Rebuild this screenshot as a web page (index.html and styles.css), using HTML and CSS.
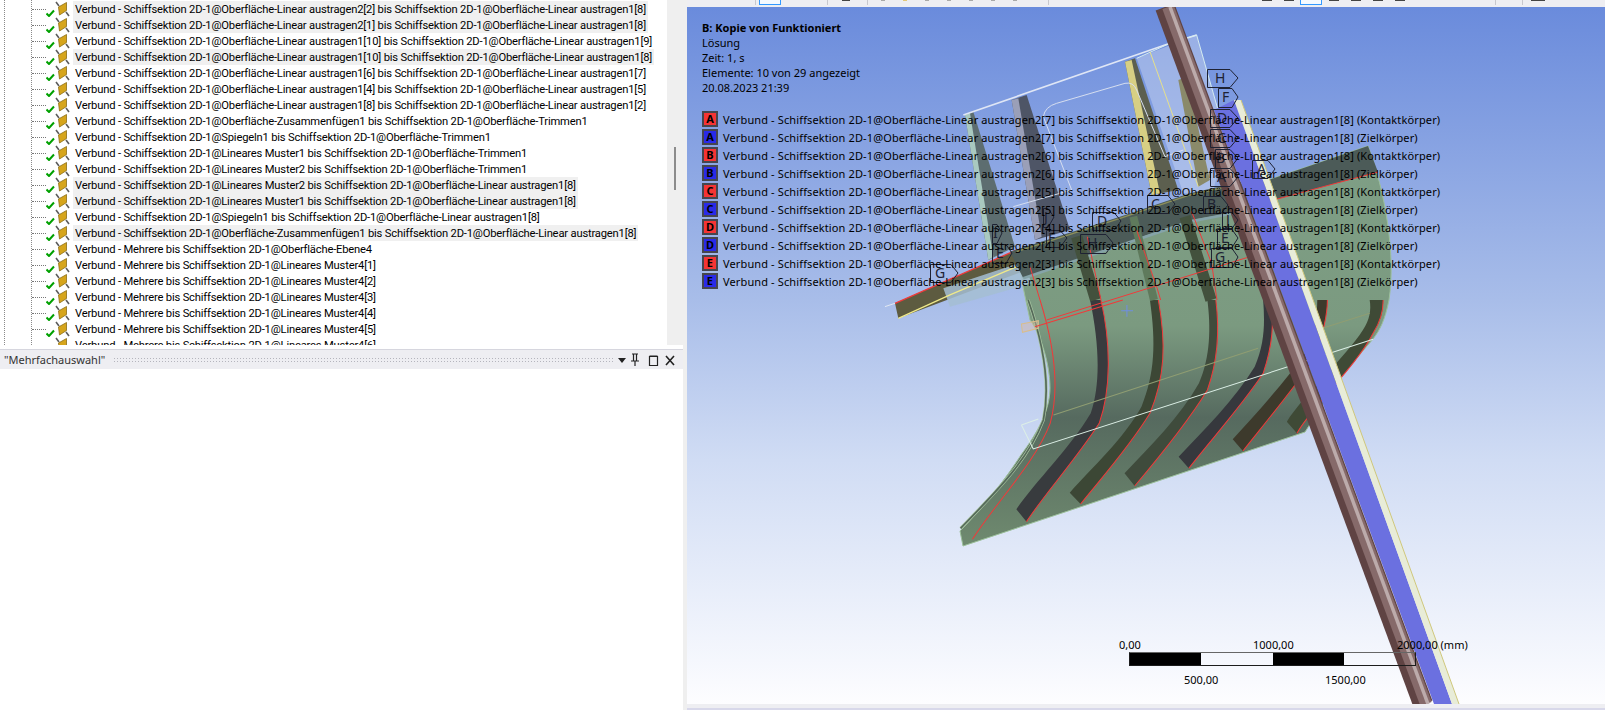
FILE: index.html
```html
<!DOCTYPE html>
<html lang="de">
<head>
    <meta charset="UTF-8">
    <meta name="viewport" content="width=device-width, initial-scale=1.0">
    <title>Mechanical - Verbindungen</title>
    <link rel="stylesheet" href="styles.css">
</head>
<body>

<svg class="defs" width="0" height="0">
    <symbol id="contact" viewBox="0 0 26 16">
        <path d="M10 1 L13 5 M20 11 L23 15" stroke="#5c5c5c" stroke-width="1.6" fill="none"/>
        <path d="M12.5 6 L20.5 1.5 L20.5 9.5 L13.5 14 Z" fill="#d6a51c" stroke="#8c6d14" stroke-width="0.8"/>
        <path d="M0.5 12.5 L3 15 L8 9.5" stroke="#00a000" stroke-width="2" fill="none"/>
    </symbol>
</svg>

<div class="app">
    <!-- Left: tree and details -->
    <div class="left">
        <div class="tree-wrap">
            <div class="tree">
                <div class="row hl"><span class="stub"></span><svg class="icon"><use href="#contact"/></svg><span class="label">Verbund - Schiffsektion 2D-1@Oberfläche-Linear austragen2[2] bis Schiffsektion 2D-1@Oberfläche-Linear austragen1[8]</span></div>
                <div class="row hl"><span class="stub"></span><svg class="icon"><use href="#contact"/></svg><span class="label">Verbund - Schiffsektion 2D-1@Oberfläche-Linear austragen2[1] bis Schiffsektion 2D-1@Oberfläche-Linear austragen1[8]</span></div>
                <div class="row"><span class="stub"></span><svg class="icon"><use href="#contact"/></svg><span class="label">Verbund - Schiffsektion 2D-1@Oberfläche-Linear austragen1[10] bis Schiffsektion 2D-1@Oberfläche-Linear austragen1[9]</span></div>
                <div class="row hl"><span class="stub"></span><svg class="icon"><use href="#contact"/></svg><span class="label">Verbund - Schiffsektion 2D-1@Oberfläche-Linear austragen1[10] bis Schiffsektion 2D-1@Oberfläche-Linear austragen1[8]</span></div>
                <div class="row"><span class="stub"></span><svg class="icon"><use href="#contact"/></svg><span class="label">Verbund - Schiffsektion 2D-1@Oberfläche-Linear austragen1[6] bis Schiffsektion 2D-1@Oberfläche-Linear austragen1[7]</span></div>
                <div class="row"><span class="stub"></span><svg class="icon"><use href="#contact"/></svg><span class="label">Verbund - Schiffsektion 2D-1@Oberfläche-Linear austragen1[4] bis Schiffsektion 2D-1@Oberfläche-Linear austragen1[5]</span></div>
                <div class="row"><span class="stub"></span><svg class="icon"><use href="#contact"/></svg><span class="label">Verbund - Schiffsektion 2D-1@Oberfläche-Linear austragen1[8] bis Schiffsektion 2D-1@Oberfläche-Linear austragen1[2]</span></div>
                <div class="row"><span class="stub"></span><svg class="icon"><use href="#contact"/></svg><span class="label">Verbund - Schiffsektion 2D-1@Oberfläche-Zusammenfügen1 bis Schiffsektion 2D-1@Oberfläche-Trimmen1</span></div>
                <div class="row"><span class="stub"></span><svg class="icon"><use href="#contact"/></svg><span class="label">Verbund - Schiffsektion 2D-1@Spiegeln1 bis Schiffsektion 2D-1@Oberfläche-Trimmen1</span></div>
                <div class="row"><span class="stub"></span><svg class="icon"><use href="#contact"/></svg><span class="label">Verbund - Schiffsektion 2D-1@Lineares Muster1 bis Schiffsektion 2D-1@Oberfläche-Trimmen1</span></div>
                <div class="row"><span class="stub"></span><svg class="icon"><use href="#contact"/></svg><span class="label">Verbund - Schiffsektion 2D-1@Lineares Muster2 bis Schiffsektion 2D-1@Oberfläche-Trimmen1</span></div>
                <div class="row hl"><span class="stub"></span><svg class="icon"><use href="#contact"/></svg><span class="label">Verbund - Schiffsektion 2D-1@Lineares Muster2 bis Schiffsektion 2D-1@Oberfläche-Linear austragen1[8]</span></div>
                <div class="row hl"><span class="stub"></span><svg class="icon"><use href="#contact"/></svg><span class="label">Verbund - Schiffsektion 2D-1@Lineares Muster1 bis Schiffsektion 2D-1@Oberfläche-Linear austragen1[8]</span></div>
                <div class="row"><span class="stub"></span><svg class="icon"><use href="#contact"/></svg><span class="label">Verbund - Schiffsektion 2D-1@Spiegeln1 bis Schiffsektion 2D-1@Oberfläche-Linear austragen1[8]</span></div>
                <div class="row hl"><span class="stub"></span><svg class="icon"><use href="#contact"/></svg><span class="label">Verbund - Schiffsektion 2D-1@Oberfläche-Zusammenfügen1 bis Schiffsektion 2D-1@Oberfläche-Linear austragen1[8]</span></div>
                <div class="row"><span class="stub"></span><svg class="icon"><use href="#contact"/></svg><span class="label">Verbund - Mehrere bis Schiffsektion 2D-1@Oberfläche-Ebene4</span></div>
                <div class="row"><span class="stub"></span><svg class="icon"><use href="#contact"/></svg><span class="label">Verbund - Mehrere bis Schiffsektion 2D-1@Lineares Muster4[1]</span></div>
                <div class="row"><span class="stub"></span><svg class="icon"><use href="#contact"/></svg><span class="label">Verbund - Mehrere bis Schiffsektion 2D-1@Lineares Muster4[2]</span></div>
                <div class="row"><span class="stub"></span><svg class="icon"><use href="#contact"/></svg><span class="label">Verbund - Mehrere bis Schiffsektion 2D-1@Lineares Muster4[3]</span></div>
                <div class="row"><span class="stub"></span><svg class="icon"><use href="#contact"/></svg><span class="label">Verbund - Mehrere bis Schiffsektion 2D-1@Lineares Muster4[4]</span></div>
                <div class="row"><span class="stub"></span><svg class="icon"><use href="#contact"/></svg><span class="label">Verbund - Mehrere bis Schiffsektion 2D-1@Lineares Muster4[5]</span></div>
                <div class="row"><span class="stub"></span><svg class="icon"><use href="#contact"/></svg><span class="label">Verbund - Mehrere bis Schiffsektion 2D-1@Lineares Muster4[6]</span></div>
            </div>
            <div class="scrollbar"><div class="thumb"></div></div>
        </div>

        <div class="details-bar">
            <span class="details-title">"Mehrfachauswahl"</span>
            <span class="grip"></span>
            <svg class="bar-icons" width="60" height="14" viewBox="0 0 60 14">
                <path d="M-1 5 H7 L3 10 Z" fill="#222"/>
                <path d="M13 1 H19 M14.5 1 V8 M17.5 1 V8 M12 8 H20 M16 8 V13" stroke="#222" stroke-width="1.2" fill="none"/>
                <path d="M30.5 3.5 H38.5 V12.5 H30.5 Z M30.5 3 H38.5" stroke="#222" stroke-width="1.2" fill="none"/>
                <path d="M47 3 L55 12 M55 3 L47 12" stroke="#222" stroke-width="1.6" fill="none"/>
            </svg>
        </div>
        <div class="details"></div>
    </div>

    <div class="splitter"></div>

    <!-- Right: graphics window -->
    <div class="right">
        <div class="toolbar">
            <span class="sep first"></span>
            <span class="tool selected"></span>
            <span class="sep second"></span>
            <span class="dash third"></span>
            <span class="sep"></span>
            <span class="mark"></span><span class="mark yellow"></span><span class="mark"></span><span class="mark"></span><span class="mark"></span><span class="mark"></span><span class="mark"></span>
            <span class="sep"></span>
            <span class="dash group"></span>
            <span class="dash"></span>
            <span class="tool selected small"></span>
            <span class="dash"></span>
            <span class="dash"></span>
            <span class="dash"></span>
            <span class="dash"></span>
            <span class="sep far"></span>
            <span class="sep near"></span>
            <span class="dash wide"></span>
        </div>

        <div class="viewport">
            <svg class="model" viewBox="687 7 918 697" preserveAspectRatio="none">
                <defs>
                    <linearGradient id="hull" x1="0" y1="0" x2="0" y2="1">
                        <stop offset="0" stop-color="#7f9f86"/>
                        <stop offset="0.45" stop-color="#7b9a80"/>
                        <stop offset="0.68" stop-color="#566a5f"/>
                        <stop offset="1" stop-color="#6f8a6f"/>
                    </linearGradient>
                </defs>

                <!-- hull sheet, coordinates taken in the page -->
                <path d="M963 546 L960 531 C985 505 1005 480 1021 455 C1038 432 1050 410 1050 388 C1050 360 1038 330 1030 320 L1018 263 L1248 187 L1368 146 C1385 190 1396 255 1389 300 C1385 320 1380 330 1373 339 L1339 379 L1305 432 Z" fill="url(#hull)" stroke="#9cc09a" stroke-width="1"/>
                <path d="M1248 187 L1368 146 L1378 172 L1255 205 Z" fill="#4c5b58"/>
                <path d="M1255 205 L1378 172" stroke="#f03a3a" stroke-width="1" fill="none"/>

                <!-- stiffeners below the seam -->
                <g transform="translate(920 300) scale(.3381 .3333)" fill="none">
                    <path d="M120 685 C230 570 320 480 365 360 C385 260 365 130 320 0" stroke="#a9c6a2" stroke-width="9"/>
                    <path d="M120 685 C230 570 320 480 365 360 C385 260 365 130 320 0" stroke="#55695a" stroke-width="5"/>

                    <path d="M315 665 C370 580 460 480 530 370 C565 270 565 130 535 0 L503 0 C530 130 535 250 505 340 C440 450 345 540 285 628 Z" fill="#383b3e"/>
                    <path d="M475 612 C540 530 620 440 680 340 C725 230 728 130 705 0 L680 0 C698 130 695 220 655 320 C600 420 510 500 443 578 Z" fill="#3c4735"/>
                    <path d="M635 558 C700 480 790 370 850 270 C885 170 885 80 875 0 L850 0 C860 80 860 170 825 250 C770 350 680 440 605 520 Z" fill="#3f4b3c"/>
                    <path d="M795 505 C860 420 950 320 1015 220 C1045 130 1045 70 1040 0 L1015 0 C1020 70 1020 130 990 200 C930 300 840 390 765 470 Z" fill="#36383d"/>
                    <path d="M955 453 C1020 370 1110 260 1170 170 C1190 100 1205 50 1205 0 L1175 0 C1175 50 1165 100 1145 150 C1085 240 995 340 925 418 Z" fill="#3d3a2c"/>
                    <path d="M1115 400 C1150 330 1290 200 1340 100 C1365 60 1370 30 1370 0 L1330 0 C1335 30 1330 60 1310 90 C1260 170 1130 290 1085 365 Z" fill="#3f4a36"/>

                    <g stroke="#f03a3a" stroke-width="3">
                        <path d="M155 718 C230 600 340 490 385 370 C415 260 395 130 355 0"/>
                        <path d="M315 665 C370 580 460 480 530 370 C565 270 565 130 535 0"/>
                        <path d="M475 612 C540 530 620 440 680 340 C725 230 728 130 705 0"/>
                        <path d="M635 558 C700 480 790 370 850 270 C885 170 885 80 875 0"/>
                        <path d="M795 505 C860 420 950 320 1015 220 C1045 130 1045 70 1040 0"/>
                        <path d="M955 453 C1020 370 1110 260 1170 170 C1190 100 1205 50 1205 0"/>
                        <path d="M1115 400 C1150 330 1290 200 1340 100 C1365 60 1370 30 1370 0"/>
                    </g>

                    <path d="M395 345 L1000 145 M1190 85 L1330 40" stroke="#8f9d72" stroke-width="3"/>
                    <path d="M300 375 L350 357 M300 375 L335 447 L1340 118" stroke="#dcefe6" stroke-width="3"/>
                    <path d="M300 72 L350 62 L350 85 L303 97 Z" stroke="#d9bd8c" stroke-width="3" fill="rgba(230,190,160,.4)"/>
                    <path d="M340 80 L600 0" stroke="#f03a3a" stroke-width="3"/>
                    <path d="M612 15 V50 M595 32 H630" stroke="#6f8fe0" stroke-width="3"/>
                </g>

                <!-- upper part: translucent plate, ribs, wing -->
                <g transform="translate(850 30) scale(.3333)" fill="none">
                    <path d="M860 85 L1040 15 L1130 330 L1090 480 L1000 490 Z" fill="rgba(205,215,240,.45)"/>
                    <path d="M345 255 L370 245 L495 650 L415 690 Z" fill="#5d6d70"/>
                    <path d="M345 255 L360 250 L430 680 L415 690 Z" fill="#a9c9c0"/>
                    <path d="M485 210 L530 195 L660 600 L555 630 Z" fill="#4e5566"/>
                    <path d="M485 210 L505 205 L575 620 L555 630 Z" fill="#9a9fb8"/>
                    <path d="M825 95 L855 85 L985 480 L905 495 Z" fill="#5c5f4f"/>
                    <path d="M825 95 L845 90 L930 490 L905 495 Z" fill="#d7cf84"/>
                    <path d="M985 150 L1010 140 L1080 450 L1045 470 Z" fill="#8a8a6a"/>
                    <path d="M340 255 L960 40 L1040 15" stroke="#dfe6f5" stroke-width="5"/>
                    <path d="M860 85 L960 40 L1040 15 L1130 330" stroke="#d5ecf0" stroke-width="3"/>
                    <path d="M900 65 L1045 470" stroke="#e6e08a" stroke-width="3"/>
                    <path d="M580 260 Q585 230 620 220 L825 160 Q850 155 860 180 L945 380 L1000 360" stroke="#d6deef" stroke-width="3"/>
                    <path d="M580 260 L665 480 L490 530" stroke="#d6deef" stroke-width="3"/>

                    <path d="M135 820 L500 660 L530 720 L145 865 Z" fill="#5d5b40"/>
                    <path d="M280 775 L520 695 L545 760 L300 830 Z" fill="rgba(165,190,210,.85)"/>
                    <path d="M135 820 L500 660" stroke="#f03a3a" stroke-width="4"/>
                    <path d="M145 865 L300 795 L500 710" stroke="#efe98a" stroke-width="4"/>
                    <path d="M105 830 L135 820" stroke="#e2e8f2" stroke-width="3"/>
                    <path d="M480 665 L810 560 L1020 490 L1200 450 L1200 540 L1020 570 L520 745 Z" fill="#4c5b58"/>
                    <path d="M500 665 L810 565 L1020 495 L1200 455" stroke="#8d8f5a" stroke-width="4"/>
                    <path d="M520 745 L1020 575 L1200 540" stroke="#85a3a8" stroke-width="8"/>
                    <path d="M680 620 L737 810 M1005 560 L1083 810" stroke="#43513d" stroke-width="34"/>
                    <path d="M850 560 L912 810" stroke="#5f7a5c" stroke-width="24"/>
                    <path d="M540 710 L570 810 M712 620 L753 810 M860 600 L920 770 L932 810 M1025 545 L1085 700 L1101 810 M590 870 L1200 680" stroke="#f03a3a" stroke-width="3"/>
                </g>

                <!-- beam, flange and web -->
                <path d="M1214 110 L1234 100 L1452 704 L1434 704 Z" fill="#6b70e0"/>
                <path d="M1234 100 L1241 100 L1459 704 L1452 704 Z" fill="#e8ecd8"/>
                <path d="M1241 100 L1459 704" stroke="#cfc77c" stroke-width="1" fill="none"/>
                <path d="M1165 7 L1423 704" stroke="#5f4343" stroke-width="20" fill="none"/>
                <path d="M1168 7 L1426 704" stroke="#866a6a" stroke-width="12" fill="none"/>
                <path d="M1170 7 L1428 704" stroke="#bcabab" stroke-width="3.5" fill="none"/>

                <!-- callout tags -->
                <g class="tags" fill="none" stroke="#1e2233" stroke-width="1">
                    <path d="M1207.5 69.5 H1230 L1238 78 L1230 87.5 H1207.5 Z"/><text x="1215" y="83">H</text>
                    <path d="M1218.5 88.5 H1232 L1238 97 L1232 107.5 H1218.5 Z"/><text x="1222" y="102">F</text>
                    <path d="M1210.5 109.5 H1230 L1238 118 L1230 127.5 H1210.5 Z"/><text x="1217" y="123">D</text>
                    <path d="M1210.5 129.5 H1230 L1238 138 L1230 147.5 H1210.5 Z"/><text x="1217" y="143">C</text>
                    <path d="M1215.5 149.5 H1230 L1238 158 L1230 168.5 H1215.5 Z"/><text x="1216" y="163">B</text>
                    <path d="M1210.5 168.5 H1230 L1238 177 L1230 186.5 H1210.5 Z"/><text x="1217" y="182">A</text>
                    <path d="M1252.5 160.5 H1268 L1275 169 L1268 178.5 H1252.5 Z"/><text x="1257" y="174">A</text>
                    <path d="M1147.5 195.5 H1168 L1175 204 L1168 213.5 H1147.5 Z"/><text x="1151" y="209">C</text>
                    <path d="M1203.5 196.5 H1221 L1228 205 L1221 213.5 H1203.5 Z"/><text x="1207" y="209">B</text>
                    <path d="M1222.5 212.5 H1232 L1238 220 L1232 228.5 H1222.5 Z"/><text x="1226" y="225">J</text>
                    <path d="M1217.5 229.5 H1232 L1238 238 L1232 247.5 H1217.5 Z"/><text x="1221" y="243">E</text>
                    <path d="M1211.5 248.5 H1232 L1238 257 L1232 267.5 H1211.5 Z"/><text x="1215" y="262">G</text>
                    <path d="M1092.5 212.5 H1114 L1121 221 L1114 230.5 H1092.5 Z"/><text x="1097" y="226">D</text>
                    <path d="M1080.5 234.5 H1106 L1113 243 L1106 253.5 H1080.5 Z"/><text x="1087" y="248">H</text>
                    <path d="M1043.5 208.5 H1048 L1054 217 L1048 227.5 H1043.5 Z"/><text x="1044" y="222">J</text>
                    <path d="M1046.5 230.5 H1060 L1067 238 L1060 247.5 H1046.5 Z"/><text x="1048" y="243">F</text>
                    <path d="M992.5 224.5 H997 L1002 233 L997 243.5 H992.5 Z"/><text x="993" y="238">I</text>
                    <path d="M992.5 244.5 H1006 L1012 253 L1006 263.5 H992.5 Z"/><text x="996" y="258">E</text>
                    <path d="M930.5 264.5 H951 L958 273 L951 282.5 H930.5 Z"/><text x="935" y="278">G</text>
                </g>
            </svg>

            <div class="info">
                <div class="info-title">B: Kopie von Funktioniert</div>
                <div>Lösung</div>
                <div>Zeit: 1, s</div>
                <div>Elemente: 10 von 29 angezeigt</div>
                <div>20.08.2023 21:39</div>
            </div>

            <div class="legend">
                <div class="legend-row"><span class="swatch red">A</span>Verbund - Schiffsektion 2D-1@Oberfläche-Linear austragen2[7] bis Schiffsektion 2D-1@Oberfläche-Linear austragen1[8] (Kontaktkörper)</div>
                <div class="legend-row"><span class="swatch blue">A</span>Verbund - Schiffsektion 2D-1@Oberfläche-Linear austragen2[7] bis Schiffsektion 2D-1@Oberfläche-Linear austragen1[8] (Zielkörper)</div>
                <div class="legend-row"><span class="swatch red">B</span>Verbund - Schiffsektion 2D-1@Oberfläche-Linear austragen2[6] bis Schiffsektion 2D-1@Oberfläche-Linear austragen1[8] (Kontaktkörper)</div>
                <div class="legend-row"><span class="swatch blue">B</span>Verbund - Schiffsektion 2D-1@Oberfläche-Linear austragen2[6] bis Schiffsektion 2D-1@Oberfläche-Linear austragen1[8] (Zielkörper)</div>
                <div class="legend-row"><span class="swatch red">C</span>Verbund - Schiffsektion 2D-1@Oberfläche-Linear austragen2[5] bis Schiffsektion 2D-1@Oberfläche-Linear austragen1[8] (Kontaktkörper)</div>
                <div class="legend-row"><span class="swatch blue">C</span>Verbund - Schiffsektion 2D-1@Oberfläche-Linear austragen2[5] bis Schiffsektion 2D-1@Oberfläche-Linear austragen1[8] (Zielkörper)</div>
                <div class="legend-row"><span class="swatch red">D</span>Verbund - Schiffsektion 2D-1@Oberfläche-Linear austragen2[4] bis Schiffsektion 2D-1@Oberfläche-Linear austragen1[8] (Kontaktkörper)</div>
                <div class="legend-row"><span class="swatch blue">D</span>Verbund - Schiffsektion 2D-1@Oberfläche-Linear austragen2[4] bis Schiffsektion 2D-1@Oberfläche-Linear austragen1[8] (Zielkörper)</div>
                <div class="legend-row"><span class="swatch red">E</span>Verbund - Schiffsektion 2D-1@Oberfläche-Linear austragen2[3] bis Schiffsektion 2D-1@Oberfläche-Linear austragen1[8] (Kontaktkörper)</div>
                <div class="legend-row"><span class="swatch blue">E</span>Verbund - Schiffsektion 2D-1@Oberfläche-Linear austragen2[3] bis Schiffsektion 2D-1@Oberfläche-Linear austragen1[8] (Zielkörper)</div>
            </div>

            <div class="scale">
                <div class="seg black"></div>
                <div class="seg"></div>
                <div class="seg black"></div>
                <div class="seg"></div>
                <span class="tick top t0">0,00</span>
                <span class="tick top t2">1000,00</span>
                <span class="tick top t4">2000,00 (mm)</span>
                <span class="tick bottom t1">500,00</span>
                <span class="tick bottom t3">1500,00</span>
            </div>
        </div>

        <div class="statusline"></div>
    </div>
</div>

</body>
</html>
```

FILE: styles.css
```css
body {
    margin: 0;
    padding: 0;
    background-color: #ffffff;
    font-family: "Noto Sans", sans-serif;
    font-size: 11px;
    color: #000000;
    overflow: hidden;
}

.defs {
    display: block;
    height: 0;
}

.app {
    display: flex;
    height: 710px;
}

/* Left column */
.left {
    width: 683px;
    display: flex;
    flex-direction: column;
    flex-shrink: 0;
}

.tree-wrap {
    display: flex;
    height: 345px;
}

.tree {
    width: 667px;
    height: 345px;
    padding-top: 1px;
    box-sizing: border-box;
    overflow: hidden;
    background-image:
        repeating-linear-gradient(to bottom, #8a8a8a 0 1px, transparent 1px 2px),
        repeating-linear-gradient(to bottom, #8a8a8a 0 1px, transparent 1px 2px);
    background-size: 1px 100%, 1px 100%;
    background-position: 4px 0, 31px 0;
    background-repeat: no-repeat;
}

.scrollbar {
    width: 16px;
    background-color: #efefef;
    padding-top: 147px;
    box-sizing: border-box;
}

.thumb {
    width: 2px;
    height: 43px;
    margin-left: 7px;
    background-color: #8c8c8c;
}

.row {
    display: flex;
    height: 16px;
    padding-left: 32px;
}

.stub {
    width: 14px;
    height: 8px;
    flex-shrink: 0;
    border-bottom: 1px dotted #777777;
}

.icon {
    width: 26px;
    height: 16px;
    margin-right: 1px;
    overflow: visible;
    flex-shrink: 0;
}

.label {
    font-family: Roboto, sans-serif;
    font-size: 11.2px;
    letter-spacing: -0.18px;
    line-height: 16px;
    height: 16px;
    padding: 1px 2px 0;
    box-sizing: border-box;
    white-space: nowrap;
    flex-shrink: 0;
}

.row.hl .label {
    background-color: #f0f0f0;
}

/* Details header */
.details-bar {
    display: flex;
    align-items: center;
    height: 20px;
    margin-top: 4px;
    padding-left: 4px;
    background-color: #eeeef2;
    border-top: 1px solid #d6d6de;
    box-sizing: border-box;
    color: #333333;
}

.details-title {
    font-size: 11px;
    white-space: nowrap;
}

.grip {
    flex: 1;
    height: 6px;
    margin: 0 5px 0 8px;
    background-image: radial-gradient(#b5b5bd 0.6px, transparent 0.7px);
    background-size: 3px 3px;
}

.bar-icons {
    margin-right: 4px;
    flex-shrink: 0;
    overflow: visible;
}

.details {
    flex: 1;
    background-color: #ffffff;
}

.splitter {
    width: 4px;
    background-color: #efefef;
    flex-shrink: 0;
}

/* Right column */
.right {
    flex: 1;
    display: flex;
    flex-direction: column;
    min-width: 0;
}

.toolbar {
    display: flex;
    align-items: flex-start;
    height: 7px;
    padding-left: 68px;
    background-color: #eeeef2;
    overflow: hidden;
    flex-shrink: 0;
}

.sep {
    width: 1px;
    height: 5px;
    margin: 0 13px;
    background-color: #c8c8ce;
}

.sep.first {
    margin: 0 3px 0 0;
}

.sep.second {
    margin: 0 14px 0 46px;
}

.dash {
    width: 10px;
    height: 1px;
    margin-right: 12px;
    background-color: #444444;
}

.dash.third {
    width: 8px;
    margin-right: 4px;
}

.dash.group {
    margin-left: 200px;
}

.dash.wide {
    width: 14px;
    margin-left: 8px;
}

.mark {
    width: 4px;
    height: 1px;
    margin-right: 18px;
    background-color: #a9a9a9;
}

.mark.yellow {
    background-color: #e4c878;
}

.tool {
    width: 22px;
    height: 5px;
    box-sizing: border-box;
    border: 1px solid #3399ff;
    border-top: none;
    background-color: #f6faff;
}

.tool.small {
    margin-right: 7px;
    margin-left: -6px;
}

.sep.far {
    margin: 0 26px 0 78px;
}

.sep.near {
    margin: 0;
}

.viewport {
    position: relative;
    flex: 1;
    padding: 13px 0 0 15px;
    box-sizing: border-box;
    overflow: hidden;
    background: linear-gradient(to bottom, #6a8bdc 0%, #a8bde9 42%, #d0dcf4 65%, #fdfdff 100%);
}

.model {
    position: absolute;
    left: 0;
    top: 0;
    width: 100%;
    height: 100%;
}

.tags text {
    font-family: "Noto Sans", sans-serif;
    font-size: 14px;
    fill: #1e2233;
    stroke: none;
}

.info {
    position: relative;
    line-height: 15px;
    font-size: 11px;
}

.info-title {
    font-weight: bold;
}

.legend {
    position: relative;
    margin-top: 15px;
    letter-spacing: 0.125px;
}

.legend-row {
    display: flex;
    align-items: center;
    height: 18px;
    white-space: nowrap;
}

.swatch {
    width: 16px;
    height: 16px;
    margin-right: 5px;
    box-sizing: border-box;
    border: 2px solid #46464e;
    text-align: center;
    font-size: 11px;
    font-weight: bold;
    line-height: 12px;
    flex-shrink: 0;
}

.swatch.red {
    background-color: #f53434;
}

.swatch.blue {
    background-color: #2a2ae8;
}

.scale {
    position: absolute;
    left: 442px;
    top: 645px;
    display: flex;
    width: 287px;
    height: 14px;
    box-sizing: border-box;
    border: 1px solid #1c1c1c;
    border-top-color: #666666;
}

.seg {
    flex: 1;
}

.seg.black {
    background-color: #000000;
}

.tick {
    position: absolute;
    white-space: nowrap;
    line-height: 14px;
}

.tick.top {
    top: -15px;
}

.tick.bottom {
    top: 20px;
}

.t0 {
    left: -11px;
}

.t1 {
    left: 54px;
}

.t2 {
    left: 123px;
}

.t3 {
    left: 195px;
}

.t4 {
    left: 267px;
}

.statusline {
    height: 6px;
    background-color: #eeeef2;
    flex-shrink: 0;
    border-bottom: 2px solid #d8d8ea;
    box-sizing: border-box;
}
```
